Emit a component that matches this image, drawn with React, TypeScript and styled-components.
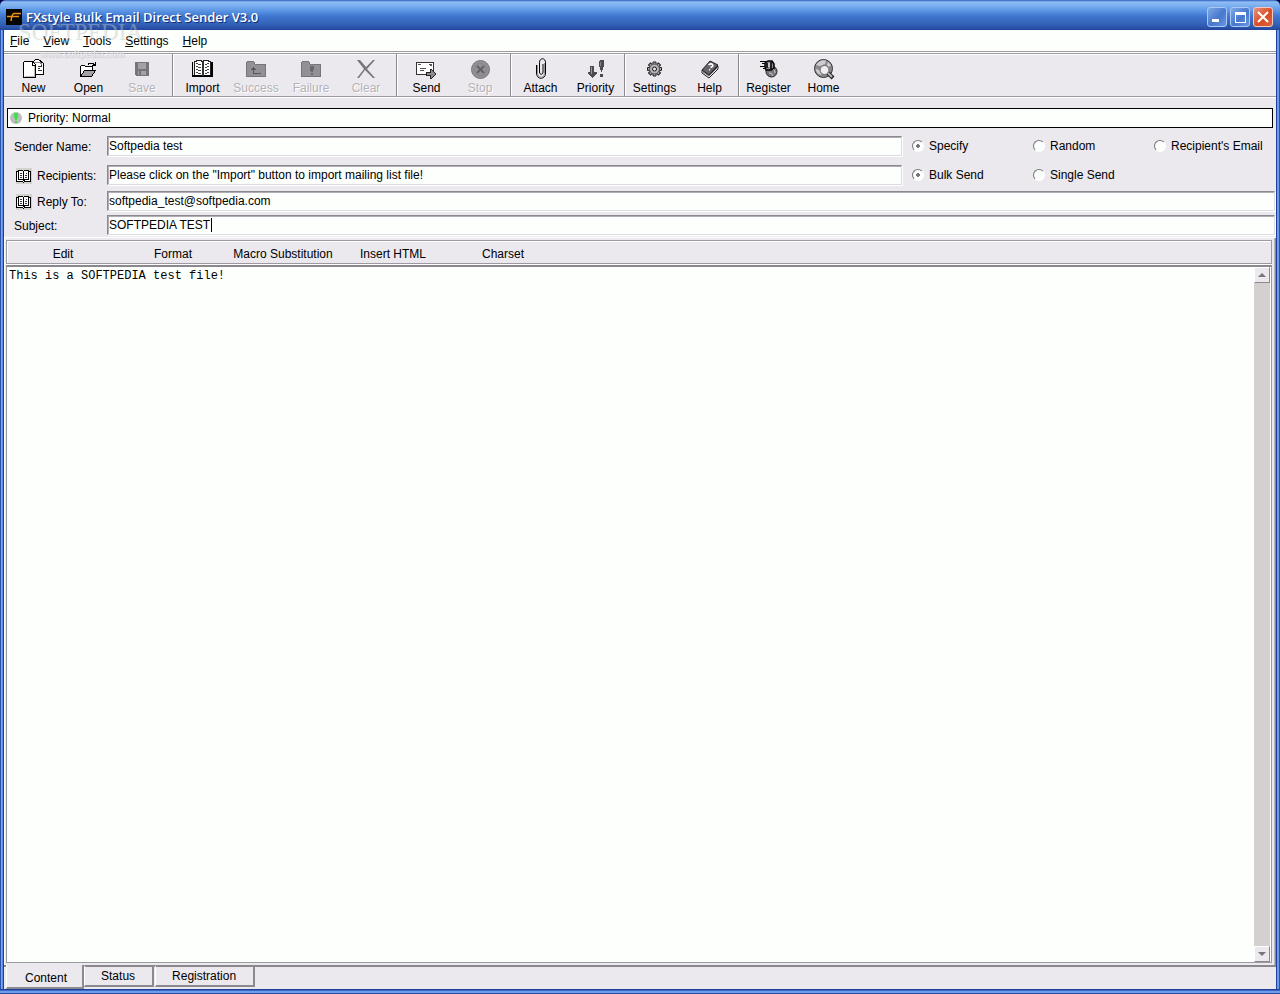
import React from "react";
import styled, { createGlobalStyle, css } from "styled-components";

const face = "#ebe8ee";
const paper = "#fcfffc";
const shade = "#9c9aa0";
const sans = '"Liberation Sans", Arial, sans-serif';

const GlobalStyle = createGlobalStyle`
  *, *::before, *::after { box-sizing: border-box; }
  body { margin: 0; background: #00004a; }
  button, input, textarea { font: inherit; color: inherit; margin: 0; padding: 0; border: 0; background: none; border-radius: 0; outline: 0; }
  fieldset { border: 0; margin: 0; padding: 0; min-width: 0; }
`;

const Window = styled.div`
  position: relative;
  display: flex;
  flex-direction: column;
  min-height: 100vh;
  border-radius: 6px 6px 0 0;
  overflow: hidden;
  font: 12px/16px ${sans};
  color: #000;
  background: #2a52a8;
`;

const Frame = styled.div`
  flex: 1;
  display: flex;
  flex-direction: column;
  padding: 0 4px;
  background: linear-gradient(90deg, #2a52a8 0 1px, #7ba6ea 1px 2px, #5b8be0 2px 3px, #1f3f9a 3px 4px, ${face} 4px calc(100% - 4px), #1f3f9a calc(100% - 4px) calc(100% - 3px), #6c9be8 calc(100% - 3px) calc(100% - 1px), #2a52a8 calc(100% - 1px));
`;

const FrameBottom = styled.div`
  height: 5px;
  background: linear-gradient(#1f3f9a 0 1px, #3a68c4 1px 2px, #6c9be8 2px 4px, #2a52a8 4px);
`;

const TitleBar = styled.header`
  display: flex;
  align-items: center;
  height: 30px;
  padding: 3px 7px 0 6px;
  background: linear-gradient(#2f5fc0 0, #8fbcf3 2px, #7fb2f0 5px, #5a94e4 11px, #3f78cf 16px, #3668be 22px, #2c56ac 27px, #21449a 30px);
`;

const Title = styled.h1`
  flex: 1;
  margin: 0 0 0 4px;
  font: 600 13px/18px "Open Sans", sans-serif;
  color: #fff;
  text-shadow: 1px 1px 0 #12307c;
`;

const CaptionButton = styled.button<{ $close?: boolean }>`
  display: grid;
  place-items: center;
  width: 20px;
  height: 20px;
  margin-left: 3px;
  border: 1px solid ${(p) => (p.$close ? "#f3c9c0" : "#a9c8f5")};
  border-radius: 3px;
  background: ${(p) => (p.$close ? "linear-gradient(135deg,#e9937c,#d84c24 55%,#d9643f)" : "linear-gradient(135deg,#7fa9e8,#4777cc 55%,#6a98e0)")};
`;

const MenuBar = styled.nav`
  display: flex;
  gap: 14px;
  height: 21px;
  padding: 3px 6px 0;
  background: ${paper};
`;

const MenuItem = styled.button`
  line-height: 16px;
  height: 16px;
  &::first-letter { text-decoration: underline; }
`;

const ToolBar = styled.div`
  display: flex;
  height: 46px;
  padding: 3px 1px 0;
  border-bottom: 1px solid ${shade};
  background: linear-gradient(${shade} 0 1px, ${paper} 1px 2px, ${shade} 2px 3px, ${paper} 3px 4px, ${face} 4px);
`;

const ToolGroup = styled.div`
  display: flex;
  padding: 0 1px;
  & + & {
    padding-left: 3px;
    background: linear-gradient(90deg, #8b898f 0 1px, #fff 1px 2px, transparent 2px);
  }
`;

const ToolButton = styled.button`
  display: flex;
  flex-direction: column;
  align-items: center;
  width: 55px;
  padding-top: 4px;
  line-height: 16px;
  svg { flex: none; display: block; }
  &:disabled {
    padding-right: 3px;
    color: #b4b2b7;
    text-shadow: 1px 1px 0 #fff;
  }
`;

const Body = styled.main`
  flex: 1;
  display: flex;
  flex-direction: column;
  padding-top: 11px;
  background: ${face};
  box-shadow: inset 0 1px #fff;
`;

const PriorityBar = styled.div`
  display: flex;
  align-items: center;
  gap: 6px;
  height: 20px;
  margin: 0 3px 8px;
  padding-left: 2px;
  border: 1px solid #000;
  background: ${paper};
`;

const Form = styled.form`
  display: flex;
  flex-direction: column;
  padding-right: 1px;
`;

const Row = styled.div<{ $after: number }>`
  display: flex;
  height: 20px;
  margin-bottom: ${(p) => p.$after}px;
`;

const Label = styled.label`
  display: flex;
  align-items: center;
  gap: 5px;
  flex: none;
  width: 103px;
  padding: 2px 0 0 10px;
  white-space: nowrap;
  &:has(svg) { padding-left: 12px; }
`;

const TextField = styled.input<{ $caretAt?: number }>`
  flex: 1;
  min-width: 0;
  padding: 0 1px;
  background: ${paper};
  border: 1px solid;
  border-color: #8b898f #dcdae2 #dcdae2 #8b898f;
  box-shadow: inset 1px 1px #b0aeb4, 1px 1px #fff;
  ${(p) =>
    p.$caretAt &&
    css`
      background: linear-gradient(#000, #000) ${p.$caretAt}px 2px / 1px 14px no-repeat ${paper};
    `}
`;

const Choices = styled.fieldset`
  flex: none;
  display: grid;
  grid-template-columns: repeat(3, 121px);
  margin-left: 10px;
`;

const Choice = styled.label`
  display: flex;
  align-items: center;
  gap: 5px;
  white-space: nowrap;
`;

const Radio = styled.input`
  appearance: none;
  flex: none;
  width: 12px;
  height: 12px;
  border: 1px solid;
  border-color: #77757b #fff #fff #77757b;
  border-radius: 50%;
  background: ${paper};
  &:checked { background: radial-gradient(circle, #77757b 0 2px, ${paper} 2px); }
`;

const Sheet = styled.section`
  flex: 1;
  display: flex;
  flex-direction: column;
  margin-top: 2px;
  padding: 2px 4px 2px 1px;
  border: solid #fff;
  border-width: 1px 0 0 1px;
  box-shadow: inset -1px 0 #8b898f, inset -2px 0 #b9b7bd;
`;

const EditBar = styled.nav`
  display: flex;
  height: 24px;
  padding: 0 1px;
  border: 1px solid ${shade};
  box-shadow: inset 1px 1px #fff, 0 1px #fff;
`;

const EditItem = styled.button`
  width: 110px;
  padding-top: 3px;
  text-align: center;
`;

const Editor = styled.div`
  flex: 1;
  display: flex;
  margin-top: 1px;
  padding-right: 1px;
  border: 1px solid ${shade};
  border-top: 2px solid #8b898f;
  background: ${paper};
`;

const TextArea = styled.textarea`
  flex: 1;
  min-width: 0;
  resize: none;
  overflow: hidden;
  padding: 1px 2px;
  font: 12px/16px "Liberation Mono", monospace;
`;

const ScrollBar = styled.div`
  display: flex;
  flex-direction: column;
  justify-content: space-between;
  width: 16px;
  background: #d4d0cf;
`;

const ScrollButton = styled.button`
  display: grid;
  place-items: center;
  width: 16px;
  height: 16px;
  background: ${face};
  border: 1px solid;
  border-color: #fff #8b898f #8b898f #fff;
`;

const Tabs = styled.div`
  display: flex;
  align-items: flex-start;
  height: 24px;
  padding-left: 2px;
  background: ${face};
  box-shadow: inset 0 2px #8b898f;
`;

const Tab = styled.button<{ $active?: boolean }>`
  height: 22px;
  padding: 0 17px 0 16px;
  margin-right: 1px;
  background: ${face};
  border: 1px solid;
  border-color: #8b898f #8b898f #8b898f #fff;
  border-width: 2px 2px 2px 1px;
  ${(p) =>
    p.$active &&
    css`
      height: 24px;
      padding: 3px 15px 0 18px;
      border-top: 0;
      margin-right: 0;
    `}
`;

const Watermark = styled.div`
  position: absolute;
  top: 20px;
  left: 18px;
  font: 23px/24px "Liberation Serif", serif;
  color: rgba(255, 255, 255, 0.28);
  text-shadow: 1px 1px 1px rgba(120, 120, 120, 0.25);
  pointer-events: none;
  small { display: block; padding-left: 22px; font: bold 9px/20px ${sans}; color: #e6e6ea; }
`;

const Svg = ({ children, w = 24, h = 22 }: { children: React.ReactNode; w?: number; h?: number }) => (
  <svg width={w} height={h} viewBox={`0 0 ${w} ${h}`} shapeRendering="crispEdges" fill="none" stroke="#000" aria-hidden="true">
    {children}
  </svg>
);

const Book = () => (
  <>
    <path fill="#fff" stroke="#222" d="M3.500 3.500h2v-1h4l2 1 2-1h4v1h2v14h-6l-2 1-2-1h-6z" />
    <path d="M1.500 4v14.500h20V4M2 17.500h19M20.500 4v13" />
    <path stroke="#333" d="M11.500 4v14M12.500 4v14" />
    <path stroke="#444" d="M5 5.500h2m0 1h3M5 8.500h2m0 1h3M5 11.500h2m0 1h3M5 14.500h2m0 1h3M14 6.500h2m0-1h2M14 9.500h2m0-1h2M14 12.500h2m0-1h2M14 15.500h2m0-1h2" />
  </>
);

const SmallBook = () => (
  <svg width="16" height="16" viewBox="0 0 16 16" shapeRendering="crispEdges" fill="none" stroke="#000" aria-hidden="true">
    <path stroke="none" fill="#d4d2ce" d="M0 0h16v16H0z" />
    <path fill="#fff" d="M.500 3.500h2v-1h4l1 1 1-1h4v1h2v10h-6l-1 1-1-1h-6z" />
    <path d="M2.500 3v8.500h4l1 1 1-1h4V3M7.500 4v9M8.500 12v2M14.500 3v11" />
    <path stroke="#333" d="M4 5.500h2m-2 2h2m-2 2h2M10 5.500h1m-2 2h2m-2 2h2" />
  </svg>
);

const gray = "#929095";
const darkGray = "#77757a";
const gearTeeth = [0, 45, 90, 135, 180, 225, 270, 315];

const icons: Record<string, React.ReactNode> = {
  New: (
    <>
      <path fill="#fff" d="M9.500 14.500V5.500l4-4h3l5 4v11h-12z" />
      <path stroke="#888" d="M12 4.500h6l2 2" />
      <path stroke="#333" d="M16 8.500h4M16 10.500h2M16 12.500h4M19.500 7v2" />
      <path fill="#fff" d="M1.500 4.500l1-1h8l3 3v13h-12z" />
      <path stroke="#bbb" d="M12.500 7v11M3 18.500h10" />
      <path d="M10.500 3v4h3" />
    </>
  ),
  Open: (
    <>
      <path fill="#fff" d="M3.500 18.500v-10l1-1h3l1 1h7v4" />
      <path fill="#a3a1a6" d="M3.500 18.500l4-6h11l-4 6z" />
      <path d="M11 6.500l1-1h4l2 2M18.500 4v4M15 7.500h4" />
    </>
  ),
  Save: (
    <>
      <path fill={darkGray} stroke={darkGray} d="M5.500 4.500h13v13h-12l-1-1z" />
      <path fill="#a3a1a6" stroke="none" d="M8 5h8v6H8zM8 13h8v4H8z" />
      <path stroke={darkGray} d="M10.500 13v4M9.500 13v4" />
    </>
  ),
  Import: <Book />,
  Success: (
    <>
      <path fill={gray} stroke={darkGray} d="M2.500 18.500v-14l1-1h6l2 3h10v12z" />
      <path stroke="#59575c" d="M9.500 9v6.500H17M7 11.500h5M8 10.500h3" />
    </>
  ),
  Failure: (
    <>
      <path fill={gray} stroke={darkGray} d="M2.500 18.500v-14l1-1h6l2 3h10v12z" />
      <path fill="#6a686d" stroke="none" d="M11 8h4v3l-1 3h-2l-1-3zM12 15h2v2h-2z" />
    </>
  ),
  Clear: (
    <g fill={darkGray} stroke="none" shapeRendering="auto">
      <path d="M3 2h3l6 7 7-7h2l-8 9 8 9h-2l-8-8-6 8H3l7-9z" />
    </g>
  ),
  Send: (
    <>
      <path fill="#fff" stroke="#333" d="M1.500 4.500h17v12h-17z" />
      <path stroke="#555" d="M3 6.500h3M5 10.500h6M5 12.500h4M14 6.500h3M15 7.500h2" />
      <path fill="#8c8a8f" stroke="#222" d="M11.500 14.500h4v-3h1l4 4v1l-4 4h-1v-3h-4z" />
    </>
  ),
  Stop: (
    <g shapeRendering="auto">
      <circle cx="12.500" cy="11.500" r="9" fill={gray} stroke={darkGray} />
      <circle cx="12.500" cy="11.500" r="6" stroke="#87858a" />
      <path stroke="#636166" strokeWidth="2" d="M9 8l7 7M16 8l-7 7" />
    </g>
  ),
  Attach: (
    <g shapeRendering="auto">
      <path d="M7.500 7v8c0 7 9 7 9 0V4.500c0-5-6-5-6 0V14c0 3 3.500 3 3.500 0V6" />
      <path stroke="#999" d="M8.500 7v8c0 5.500 7 5.500 7 0V5" />
    </g>
  ),
  Priority: (
    <>
      <path fill="#4d4b50" stroke="none" d="M6 8h4v6h3v1l-4 5H8l-4-5v-1h2z" />
      <path stroke="#999" d="M7.500 9v7" />
      <path fill="#4d4b50" stroke="none" d="M15 3l1-1h3l1 1v4l-2 7h-1l-2-7zM16 16h3v3h-3z" />
      <path stroke="#888" d="M16.500 4v4" />
    </>
  ),
  Settings: (
    <g shapeRendering="auto">
      {gearTeeth.map((angle) => (
        <path key={angle} fill="#aaa" stroke="#222" d="M10 7V4h3v3z" transform={`rotate(${angle} 11.500 11)`} />
      ))}
      <circle cx="11.500" cy="11" r="5" fill="#b5b3b8" stroke="#555" />
      <circle cx="11.500" cy="11" r="2" fill="#eee" stroke="#111" />
    </g>
  ),
  Help: (
    <g shapeRendering="auto">
      <path fill="#eee" stroke="#222" d="M4 12v3l7 5 9-9V8l-9 9z" />
      <path stroke="#777" d="M5 14l6 4 8-8" />
      <path fill="#66646a" stroke="#222" d="M4 12l8-9 8 4-9 10z" />
      <path stroke="#fff" strokeWidth="1.500" d="M10.500 7q2.500-2 4-.5t-2 3M11 11.500l1 .5" />
    </g>
  ),
  Register: (
    <g shapeRendering="auto">
      <circle cx="14.500" cy="13.500" r="5.500" fill="#77757a" stroke="#222" />
      <path stroke="#ccc" d="M12 15q3-1 4 3M16 11q2 1 2 4" />
      <path fill="#8c8a8f" strokeWidth="1.500" d="M8 5l3-2h4l2 3v4l-3 2H9l-1-3z" />
      <path stroke="#fff" d="M12 5v4" />
      <path strokeWidth="1.500" d="M14 4v7M10 5v5" />
      <path d="M3 3.500h7M5 5.500h3M3 8.500h5M6 10.500h3" />
    </g>
  ),
  Home: (
    <g shapeRendering="auto">
      <circle cx="11.500" cy="10.500" r="9" fill="#8c8a8f" stroke="#333" />
      <path fill="#cfcdd2" stroke="none" d="M4 7q4-6 10-4.500L13 6 8 8zM3.500 11l4 1 2 5q-5-1-6-6zM16 4l3 3-2 2-2-2z" />
      <path stroke="#222" strokeWidth="4" d="M16 15l5 5" />
      <path stroke="#bbb" strokeWidth="2" d="M16 15l4 4" />
      <circle cx="12.500" cy="12" r="4.500" fill="#eee" stroke="#66646a" />
    </g>
  ),
};

const toolGroups = [
  ["New", "Open", "Save"],
  ["Import", "Success", "Failure", "Clear"],
  ["Send", "Stop"],
  ["Attach", "Priority"],
  ["Settings", "Help"],
  ["Register", "Home"],
];
const disabledTools = ["Save", "Success", "Failure", "Clear", "Stop"];

export default function App() {
  return (
    <Window>
      <GlobalStyle />
      <TitleBar>
        <svg width="16" height="16" viewBox="0 0 16 16" aria-hidden="true">
          <path fill="#060400" d="M0 0h16v16H0z" />
          <path fill="none" stroke="#e8941c" strokeWidth="1.500" d="M15 4.500H8Q6 4.500 5 12M1 7.500h12" />
        </svg>
        <Title>FXstyle Bulk Email Direct Sender V3.0</Title>
        <CaptionButton aria-label="Minimize">
          <svg width="14" height="14"><path fill="#fff" d="M2 9h7v3H2z" /></svg>
        </CaptionButton>
        <CaptionButton aria-label="Maximize">
          <svg width="14" height="14" shapeRendering="crispEdges"><path fill="#fff" fillRule="evenodd" d="M2 2h11v11H2zM3 5v7h9V5z" /></svg>
        </CaptionButton>
        <CaptionButton $close aria-label="Close">
          <svg width="14" height="14"><path stroke="#fff" strokeWidth="2" d="M2 2l10 10M12 2L2 12" /></svg>
        </CaptionButton>
      </TitleBar>
      <Frame>
        <MenuBar>
          {["File", "View", "Tools", "Settings", "Help"].map((m) => <MenuItem key={m}>{m}</MenuItem>)}
        </MenuBar>
        <ToolBar>
          {toolGroups.map((group) => (
            <ToolGroup key={group[0]}>
              {group.map((name) => (
                <ToolButton key={name} disabled={disabledTools.includes(name)}>
                  <Svg>{icons[name]}</Svg>
                  {name}
                </ToolButton>
              ))}
            </ToolGroup>
          ))}
        </ToolBar>
        <Body>
          <PriorityBar>
            <svg width="12" height="12" aria-hidden="true">
              <circle cx="6" cy="6" r="6" fill="#bdbdbd" />
              <path fill="#3fe04c" d="M4 1h4v3L7 8H5L4 4zM5 9h2v2H5z" />
            </svg>
            Priority: Normal
          </PriorityBar>
          <Form>
            <Row $after={9}>
              <Label htmlFor="sender">Sender Name:</Label>
              <TextField id="sender" defaultValue="Softpedia test" />
              <Choices aria-label="Sender name">
                <Choice><Radio type="radio" name="sender" defaultChecked />Specify</Choice>
                <Choice><Radio type="radio" name="sender" />Random</Choice>
                <Choice><Radio type="radio" name="sender" />Recipient's Email</Choice>
              </Choices>
            </Row>
            <Row $after={6}>
              <Label htmlFor="recipients"><SmallBook />Recipients:</Label>
              <TextField id="recipients" defaultValue={'Please click on the "Import" button to import mailing list file!'} />
              <Choices aria-label="Send mode">
                <Choice><Radio type="radio" name="mode" defaultChecked />Bulk Send</Choice>
                <Choice><Radio type="radio" name="mode" />Single Send</Choice>
              </Choices>
            </Row>
            <Row $after={4}>
              <Label htmlFor="reply"><SmallBook />Reply To:</Label>
              <TextField id="reply" defaultValue="softpedia_test@softpedia.com" />
            </Row>
            <Row $after={0}>
              <Label htmlFor="subject">Subject:</Label>
              <TextField id="subject" $caretAt={103} defaultValue="SOFTPEDIA TEST" />
            </Row>
          </Form>
          <Sheet>
            <EditBar>
              {["Edit", "Format", "Macro Substitution", "Insert HTML", "Charset"].map((m) => <EditItem key={m}>{m}</EditItem>)}
            </EditBar>
            <Editor>
              <TextArea aria-label="Message" defaultValue="This is a SOFTPEDIA test file!" />
              <ScrollBar>
                <ScrollButton aria-label="Scroll up"><svg width="8" height="4"><path fill="#77757b" d="M0 4l4-4 4 4z" /></svg></ScrollButton>
                <ScrollButton aria-label="Scroll down"><svg width="8" height="4"><path fill="#77757b" d="M0 0l4 4 4-4z" /></svg></ScrollButton>
              </ScrollBar>
            </Editor>
          </Sheet>
          <Tabs role="tablist">
            <Tab $active role="tab" aria-selected="true">Content</Tab>
            <Tab role="tab" aria-selected="false">Status</Tab>
            <Tab role="tab" aria-selected="false">Registration</Tab>
          </Tabs>
        </Body>
      </Frame>
      <FrameBottom />
      <Watermark aria-hidden="true">SOFTPEDIA<small>www.softpedia.com</small></Watermark>
    </Window>
  );
}
